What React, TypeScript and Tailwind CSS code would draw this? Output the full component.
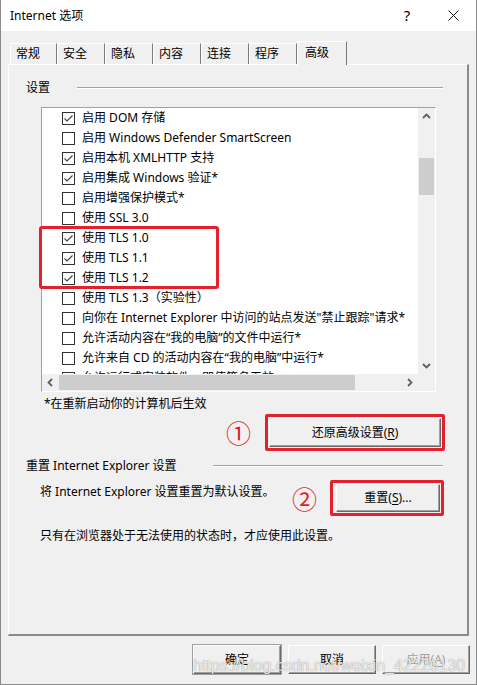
import React from "react";

const items: [boolean, string][] = [
  [true, "启用 DOM 存储"],
  [false, "启用 Windows Defender SmartScreen"],
  [true, "启用本机 XMLHTTP 支持"],
  [true, "启用集成 Windows 验证*"],
  [false, "启用增强保护模式*"],
  [false, "使用 SSL 3.0"],
  [true, "使用 TLS 1.0"],
  [true, "使用 TLS 1.1"],
  [true, "使用 TLS 1.2"],
  [false, "使用 TLS 1.3（实验性）"],
  [false, "向你在 Internet Explorer 中访问的站点发送\"禁止跟踪\"请求*"],
  [false, "允许活动内容在“我的电脑”的文件中运行*"],
  [false, "允许来自 CD 的活动内容在“我的电脑”中运行*"],
  [false, "允许运行或安装软件，即使签名无效"],
];

function Check({ on }: { on: boolean }) {
  return (
    <span className="w-[13px] h-[13px] border border-[#333333] bg-white flex items-center justify-center shrink-0">
      {on && (
        <svg width="11" height="11" viewBox="0 0 11 11">
          <path d="M1.5 5.5 L4 8 L9.5 2.5" fill="none" stroke="#404040" strokeWidth="1.1" />
        </svg>
      )}
    </span>
  );
}

function Chevron({ dir }: { dir: "up" | "down" | "left" | "right" }) {
  const d =
    dir === "up"
      ? "M1 6 L4.5 2.5 L8 6"
      : dir === "down"
      ? "M1 3 L4.5 6.5 L8 3"
      : dir === "left"
      ? "M6 1 L2.5 4.5 L6 8"
      : "M3 1 L6.5 4.5 L3 8";
  return (
    <svg width="9" height="9" viewBox="0 0 9 9">
      <path d={d} fill="none" stroke="#606060" strokeWidth="1.8" />
    </svg>
  );
}

const classicBtn =
  "flex items-center justify-center bg-[#f0f0f0] border border-t-white border-l-white border-r-[#696969] border-b-[#696969] shadow-[inset_-1px_-1px_0_#a0a0a0] text-[12px]";

export default function App() {
  return (
    <div className="relative w-[477px] h-[685px] bg-[#f0f0f0] border-x border-b border-[#8a8a8a] overflow-hidden font-['Noto_Sans','Noto_Sans_CJK_SC',sans-serif] text-[12px] text-black">
      {/* Title bar */}
      <div className="h-[31px] bg-white flex items-center">
        <span className="pl-[9px] text-[12px] leading-none">Internet 选项</span>
        <div className="ml-auto flex h-full">
          <div className="w-[46px] h-full flex items-center justify-center text-[15px] leading-none">?</div>
          <div className="w-[46px] h-full flex items-center justify-center">
            <svg width="11" height="11" viewBox="0 0 11 11">
              <path d="M0.5 0.5 L10.5 10.5 M10.5 0.5 L0.5 10.5" stroke="#111" strokeWidth="1" />
            </svg>
          </div>
        </div>
      </div>

      {/* Tabs */}
      <div className="h-[33px] flex items-end pl-[9px] relative z-10">
        {["常规", "安全", "隐私", "内容", "连接", "程序"].map((t, i) => (
          <div
            key={t}
            className={`${i === 0 ? "w-[47px]" : "w-[48px]"} h-[21px] border-l border-t border-l-white border-t-white border-r border-r-[#7a7a7a] flex items-center pl-[5px] text-[12px]`}
          >
            {t}
          </div>
        ))}
        <div className="w-[50px] h-[24px] -mb-[1px] bg-[#f0f0f0] border-l border-t border-l-white border-t-white border-r border-r-[#7a7a7a] flex items-start pt-[2px] pl-[7px] text-[12px]">
          高级
        </div>
      </div>

      {/* Panel */}
      <div className="ml-[7px] w-[461px] h-[572px] border-l border-t border-l-white border-t-white border-r-2 border-b-2 border-r-[#8a8a8a] border-b-[#8a8a8a] flex flex-col">
        {/* group label */}
        <div className="mt-[15px] h-[16px] flex items-center pl-[17px] pr-[24px]">
          <span className="w-[51px] leading-[16px]">设置</span>
          <div className="flex-1 border-t border-t-[#a0a0a0] border-b border-b-white" />
        </div>

        {/* List box */}
        <div className="relative mt-[11px] ml-[32px] w-[395px] h-[285px]">
          <div className="w-full h-full border border-t-[#a0a0a0] border-l-[#a0a0a0] border-r-white border-b-white flex flex-col">
            <div className="flex h-[266px]">
              <div className="w-[376px] h-[266px] bg-white overflow-hidden">
                {items.map(([on, label], i) => (
                  <div key={i} className="h-[20px] flex items-center pl-[20px] gap-[7px] whitespace-nowrap">
                    <Check on={on} />
                    <span className="leading-[16px]">{label}</span>
                  </div>
                ))}
              </div>
              <div className="w-[17px] h-[266px] bg-[#f0f0f0] flex flex-col">
                <div className="h-[17px] flex items-center justify-center">
                  <Chevron dir="up" />
                </div>
                <div className="flex-1">
                  <div className="mt-[33px] mx-[1px] h-[37px] bg-[#cdcdcd]" />
                </div>
                <div className="h-[17px] flex items-center justify-center">
                  <Chevron dir="down" />
                </div>
              </div>
            </div>
            <div className="flex h-[17px]">
              <div className="w-[376px] bg-[#f0f0f0] flex items-center">
                <div className="w-[17px] h-full flex items-center justify-center">
                  <Chevron dir="left" />
                </div>
                <div className="flex-1 h-full py-[1px]">
                  <div className="w-[296px] h-full bg-[#cdcdcd]" />
                </div>
                <div className="w-[17px] h-full flex items-center justify-center">
                  <Chevron dir="right" />
                </div>
              </div>
              <div className="w-[17px] bg-[#f0f0f0]" />
            </div>
          </div>
          <div className="absolute left-[-2px] top-[119px] w-[180px] h-[63px] border-[3px] border-[#e5202d] rounded-[3px]" />
        </div>

        {/* note */}
        <div className="mt-[4px] ml-[35px] h-[16px] leading-[16px]">*在重新启动你的计算机后生效</div>

        {/* restore advanced row */}
        <div className="mt-[2px] h-[37px] flex items-center justify-end pr-[22px]">
          <span className="text-[#e5202d] text-[25px] leading-none font-['Noto_Sans_CJK_SC',sans-serif]">①</span>
          <div className="ml-[14px] w-[180px] h-[37px] border-[3px] border-[#e5202d] rounded-[2px] p-[1px]">
            <div className={`${classicBtn} w-full h-full text-black`}>
              还原高级设置(<span className="underline underline-offset-2">R</span>)
            </div>
          </div>
        </div>

        {/* group 2 label */}
        <div className="mt-[7px] h-[16px] flex items-center pl-[17px] pr-[24px]">
          <span className="w-[187px] leading-[16px] whitespace-nowrap">重置 Internet Explorer 设置</span>
          <div className="flex-1 border-t border-t-[#a0a0a0] border-b border-b-white" />
        </div>

        {/* reset row */}
        <div className="mt-[6px] h-[36px] flex items-start">
          <span className="ml-[31px] mt-[4px] leading-[16px] whitespace-nowrap">将 Internet Explorer 设置重置为默认设置。</span>
          <span className="ml-auto self-center text-[#e5202d] text-[25px] leading-none font-['Noto_Sans_CJK_SC',sans-serif]">②</span>
          <div className="ml-[13px] mr-[23px] w-[114px] h-[36px] border-[3px] border-[#e5202d] rounded-[2px] p-[1px] pl-[3px]">
            <div className={`${classicBtn} w-full h-full text-black`}>
              重置(<span className="underline underline-offset-2">S</span>)...
            </div>
          </div>
        </div>

        <div className="mt-[12px] ml-[31px] leading-[16px]">只有在浏览器处于无法使用的状态时，才应使用此设置。</div>
      </div>

      {/* bottom buttons */}
      <div className="mt-[9px] flex justify-end pr-[6px]">
        <div className={`${classicBtn} w-[88px] h-[29px] text-black outline outline-1 outline-[#a0a0a0]`}>确定</div>
        <div className={`${classicBtn} ml-[7px] w-[88px] h-[29px] text-black`}>取消</div>
        <div className={`${classicBtn} ml-[6px] w-[88px] h-[29px] text-[#a0a0a0]`}>
          应用(<span className="underline underline-offset-2">A</span>)
        </div>
      </div>

      {/* watermark */}
      <div className="absolute left-[192px] top-[658px] text-[16px] leading-[16px] font-['Liberation_Sans',Arial,sans-serif] text-white/85 [text-shadow:0_0_1px_rgba(0,0,0,0.55)] whitespace-nowrap pointer-events-none">
        https://blog.csdn.net/weixin_42226130
      </div>
    </div>
  );
}
